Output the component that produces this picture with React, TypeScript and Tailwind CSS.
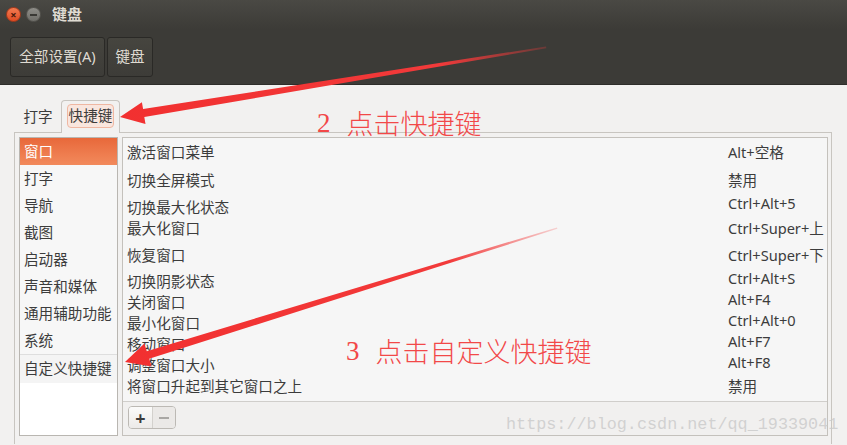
const categories = ['窗口', '打字', '导航', '截图', '启动器', '声音和媒体', '通用辅助功能', '系统']

// the GTK list here renders with uneven row offsets, so each cell keeps its own gap
const actions = [
  { name: '激活窗口菜单', key: 'Alt+空格', nm: 'mt-[4px]', km: 'mt-[4px]' },
  { name: '切换全屏模式', key: '禁用', nm: 'mt-[8px]', km: 'mt-[8px]' },
  { name: '切换最大化状态', key: 'Ctrl+Alt+5', nm: 'mt-[7px]', km: 'mt-[3px]' },
  { name: '最大化窗口', key: 'Ctrl+Super+上', nm: 'mt-[1px]', km: 'mt-[5px]' },
  { name: '恢复窗口', key: 'Ctrl+Super+下', nm: 'mt-[7px]', km: 'mt-[7px]' },
  { name: '切换阴影状态', key: 'Ctrl+Alt+S', nm: 'mt-[6px]', km: 'mt-[3px]' },
  { name: '关闭窗口', key: 'Alt+F4', nm: 'mt-[1px]', km: 'mt-[1px]' },
  { name: '最小化窗口', key: 'Ctrl+Alt+0', nm: 'mt-[1px]', km: 'mt-[1px]' },
  { name: '移动窗口', key: 'Alt+F7', nm: 'mt-[1px]', km: 'mt-[1px]' },
  { name: '调整窗口大小', key: 'Alt+F8', nm: 'mt-[1px]', km: 'mt-[1px]' },
  { name: '将窗口升起到其它窗口之上', key: '禁用', nm: 'mt-[1px]', km: 'mt-[4px]' },
]

function Annotations() {
  return (
    <svg className="pointer-events-none absolute left-0 top-0" width="847" height="445" viewBox="0 0 847 445">
      <defs>
        <linearGradient id="fade1" x1="120" y1="117" x2="546" y2="47" gradientUnits="userSpaceOnUse">
          <stop offset="0" stopColor="#f23030" />
          <stop offset="0.75" stopColor="#f23a3a" />
          <stop offset="1" stopColor="#f23a3a" stopOpacity="0.25" />
        </linearGradient>
        <linearGradient id="fade2" x1="125" y1="362" x2="557" y2="228" gradientUnits="userSpaceOnUse">
          <stop offset="0" stopColor="#f23030" />
          <stop offset="0.75" stopColor="#f23a3a" />
          <stop offset="1" stopColor="#f23a3a" stopOpacity="0.2" />
        </linearGradient>
      </defs>
      {/* arrow to the shortcut tab */}
      <polygon
        fill="url(#fade1)"
        points="120,117 141.9,102.2 143.1,109.1 546,46.5 546.3,48.3 144.3,117 145.5,124"
      />
      {/* arrow to custom shortcuts */}
      <polygon
        fill="url(#fade2)"
        points="125,362 144.4,343.5 146.8,351.2 557,227.4 557.4,228.8 149.2,358.8 151.6,366.5"
      />
    </svg>
  )
}

export default function App() {
  return (
    <div className="relative h-[445px] w-[847px] overflow-hidden bg-[#f2f1f0] font-['Noto_Sans','Noto_Sans_CJK_SC',sans-serif] text-[14.6px] text-[#3c3c3c]">
      {/* Title bar */}
      <div className="flex h-[29px] items-center bg-gradient-to-b from-[#4a4944] to-[#3c3b37] pl-[6px]">
        <div className="flex h-[15px] w-[15px] items-center justify-center rounded-full border border-[#a8391a] bg-gradient-to-b from-[#f37a50] to-[#df4b22] text-[11px] leading-none font-bold text-[#4a1a0c]">
          ×
        </div>
        <div className="ml-[5px] flex h-[15px] w-[15px] items-center justify-center rounded-full border border-[#55544f] bg-gradient-to-b from-[#8f8e89] to-[#6f6e69]">
          <div className="h-[2px] w-[7px] bg-[#3a3935]" />
        </div>
        <span className="ml-[11px] text-[15px] font-bold text-[#dfdbd2]">键盘</span>
      </div>

      {/* Toolbar */}
      <div className="flex h-[56px] gap-[2px] border-b border-[#2e2d2a] bg-[#3c3b37] px-[10px] pt-[8px]">
        <div className="flex h-[40px] w-[95px] items-center justify-center rounded-[3px] border border-[#2a2926] bg-gradient-to-b from-[#46453f] to-[#3d3c38] text-[#dfdbd2]">
          全部设置(A)
        </div>
        <div className="flex h-[40px] w-[46px] items-center justify-center rounded-[3px] border border-[#2a2926] bg-gradient-to-b from-[#46453f] to-[#3d3c38] text-[#dfdbd2]">
          键盘
        </div>
      </div>

      {/* Notebook */}
      <div className="flex flex-col pl-[14px] pr-[15px] pt-[15px]">
        <div className="flex h-[32px] items-end">
          <div className="flex h-[28px] w-[46px] items-center justify-center pb-[2px] pl-[2px]">打字</div>
          <div className="relative z-10 -mb-px ml-[1px] flex h-[33px] w-[59px] items-start justify-center rounded-t-[4px] border-l border-r border-t border-[#c8c5c0] bg-[#f2f1f0] pt-[3px]">
            <div className="flex h-[24px] w-[47px] items-center justify-center rounded-[4px] border border-[#efb7a2] bg-[#f9e6de]">
              快捷键
            </div>
          </div>
        </div>

        <div className="flex h-[312px] border-l border-r border-t border-[#c8c5c0] pl-[4px] pr-[3px] pt-[4px]">
          {/* Category list */}
          <div className="flex h-[299px] w-[99px] flex-col border border-[#b9b6b1] bg-white">
            {categories.map((c, i) => (
              <div
                key={c}
                className={
                  i === 0
                    ? 'flex h-[27px] items-center bg-gradient-to-b from-[#e8683a] to-[#f28a5c] pl-[4px] text-white'
                    : 'flex h-[27px] items-center bg-[#f7f7f7] pl-[4px]'
                }
              >
                {c}
              </div>
            ))}
            <div className="h-px bg-[#dedede]" />
            <div className="flex h-[28px] items-center bg-[#f4f4f4] pl-[4px]">自定义快捷键</div>
          </div>

          {/* Shortcut list */}
          <div className="ml-[4px] flex h-[299px] flex-1 flex-col border border-[#c4c1bc]">
            <div className="flex flex-1 justify-between bg-[#f6f6f6] pl-[4px]">
              <div className="flex flex-col">
                {actions.map((a) => (
                  <div key={a.name} className={`h-[20px] leading-[20px] ${a.nm}`}>
                    {a.name}
                  </div>
                ))}
              </div>
              <div className="flex w-[99px] flex-col">
                {actions.map((a, i) => (
                  <div key={i} className={`h-[20px] leading-[20px] ${a.km}`}>
                    {a.key}
                  </div>
                ))}
              </div>
            </div>
            <div className="flex h-[34px] items-start border-t border-[#d0cecb] bg-[#f1f0ef] pl-[5px] pt-[4px]">
              <div className="flex h-[23px] overflow-hidden rounded-[4px] border border-[#bcb9b4]">
                <div className="flex w-[24px] items-center justify-center border-r border-[#d3d1cd] bg-gradient-to-b from-[#fbfbfa] to-[#eceae8] text-[18px] leading-none font-bold text-[#3c3c3c]">
                  +
                </div>
                <div className="flex w-[22px] items-center justify-center bg-[#ebe9e7]">
                  <div className="h-[2px] w-[10px] bg-[#a9a7a4]" />
                </div>
              </div>
            </div>
          </div>
        </div>
      </div>

      {/* Red annotations */}
      <div className="pointer-events-none absolute left-[317px] top-[105px] flex items-center text-[27px] leading-[36px] text-[#f24848]">
        <span className="font-['Liberation_Serif',serif]">2</span>
        <span className="ml-[16px] font-['Noto_Sans_CJK_SC',sans-serif] font-light">点击快捷键</span>
      </div>
      <div className="pointer-events-none absolute left-[346px] top-[333px] flex items-center text-[27px] leading-[36px] text-[#f24848]">
        <span className="font-['Liberation_Serif',serif]">3</span>
        <span className="ml-[16px] font-['Noto_Sans_CJK_SC',sans-serif] font-light">点击自定义快捷键</span>
      </div>
      <Annotations />

      {/* Watermark */}
      <div className="pointer-events-none absolute left-[506px] top-[412px] font-['Liberation_Mono',monospace] text-[16.8px] text-[#c9c9c9]/80">
        https://blog.csdn.net/qq_19339041
      </div>
    </div>
  )
}
